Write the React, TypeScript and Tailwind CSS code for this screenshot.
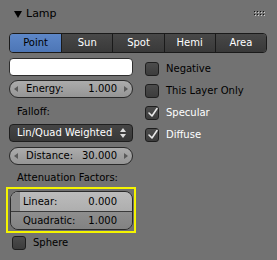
import React from 'react';

const tabs = ['Point', 'Sun', 'Spot', 'Hemi', 'Area'];

const checks = [
  { label: 'Negative', on: false },
  { label: 'This Layer Only', on: false },
  { label: 'Specular', on: true },
  { label: 'Diffuse', on: true },
];

function Checkbox({ on }: { on: boolean }) {
  return (
    <div className="relative w-[14px] h-[14px] shrink-0 rounded-[3px] border border-[#1e1e1e] bg-gradient-to-b from-[#4c4c4c] to-[#3c3c3c]">
      {on && (
        <svg className="absolute left-[1px] top-[0px]" width="12" height="12" viewBox="0 0 12 12">
          <polyline points="2,6 5,9 10,1.5" fill="none" stroke="#e8e8e8" strokeWidth="1.6" strokeLinecap="round" strokeLinejoin="round" />
        </svg>
      )}
    </div>
  );
}

function NumField({ label, value }: { label: string; value: string }) {
  return (
    <div className="relative h-[18px] rounded-[9px] border border-[#2a2a2a] bg-gradient-to-b from-[#acacac] to-[#959595] flex items-center pl-[16px] pr-[15px] text-black">
      <span className="absolute left-[4px] top-[5px] w-0 h-0 border-y-[3px] border-y-transparent border-r-[4px] border-r-[#5a5a5a]" />
      <span className="flex-1">{label}</span>
      <span>{value}</span>
      <span className="absolute right-[4px] top-[5px] w-0 h-0 border-y-[3px] border-y-transparent border-l-[4px] border-l-[#5a5a5a]" />
    </div>
  );
}

export default function App() {
  return (
    <div className="w-[277px] h-[260px] bg-[#727272] overflow-hidden font-['DejaVu_Sans',sans-serif] text-[10px] leading-none select-none">
      {/* header */}
      <div className="h-[27px] flex items-center pl-[14px] pr-[11px]">
        <svg width="8" height="8" viewBox="0 0 8 8" className="mt-[1px]">
          <polygon points="0,1 8,1 4,8" fill="#000" />
        </svg>
        <span className="ml-[4px] text-[11px] text-black flex-1">Lamp</span>
        <svg width="12" height="6" viewBox="0 0 12 6">
          {[0, 3, 6, 9].map(x =>
            [0, 3].map(y => (
              <g key={`${x}-${y}`}>
                <rect x={x + 1} y={y + 1} width="1" height="1" fill="#cfcfcf" />
                <rect x={x} y={y} width="1" height="1" fill="#111" />
              </g>
            ))
          )}
        </svg>
      </div>

      {/* lamp type tabs */}
      <div className="mt-[6px] ml-[9px] w-[258px] h-[20px] grid grid-cols-5 rounded-[4px] border border-[#1a1a1a] overflow-hidden">
        {tabs.map((t, i) => (
          <div
            key={t}
            className={
              'flex items-center justify-center ' +
              (i > 0 ? 'border-l border-[#1a1a1a] ' : '') +
              (i === 0
                ? 'bg-gradient-to-b from-[#5d87c8] to-[#4d76b6] text-black'
                : 'bg-gradient-to-b from-[#484848] to-[#393939] text-white')
            }
          >
            {t}
          </div>
        ))}
      </div>

      <div className="flex">
        {/* left column */}
        <div className="ml-[9px] w-[124px] flex flex-col">
          <div className="mt-[5px] h-[18px] rounded-[4px] border border-[#2e2e2e] bg-white" />
          <div className="mt-[4px]">
            <NumField label="Energy:" value="1.000" />
          </div>
          <div className="mt-[5px] h-[18px] flex items-center pl-[8px] text-black">Falloff:</div>
          <div className="mt-[3px] h-[18px] rounded-[4px] border border-[#1e1e1e] bg-gradient-to-b from-[#454545] to-[#383838] flex items-center pl-[7px] pr-[6px] text-white">
            <span className="flex-1">Lin/Quad Weighted</span>
            <span className="flex flex-col gap-[2px]">
              <span className="w-0 h-0 border-x-[3px] border-x-transparent border-b-[4px] border-b-[#dddddd]" />
              <span className="w-0 h-0 border-x-[3px] border-x-transparent border-t-[4px] border-t-[#dddddd]" />
            </span>
          </div>
          <div className="mt-[5px]">
            <NumField label="Distance:" value="30.000" />
          </div>
          <div className="mt-[4px] h-[18px] flex items-center pl-[8px] text-black">Attenuation Factors:</div>

          {/* highlighted group */}
          <div className="-mx-[3px] border-2 border-[#f4f400] pt-[2px] pb-[1px] pl-[2px] pr-[1px]">
            <div className="rounded-[8px] border border-[#2a2a2a] overflow-hidden text-black">
              <div className="relative h-[19px] flex items-center bg-gradient-to-b from-[#bcbcbc] to-[#aeaeae] pl-[12px] pr-[15px]">
                <span className="absolute left-0 top-0 bottom-0 w-[9px] bg-[#8a8a8a]" />
                <span className="relative flex-1">Linear:</span>
                <span className="relative">0.000</span>
              </div>
              <div className="h-[18px] flex items-center border-t border-[#3a3a3a] bg-gradient-to-b from-[#8e8e8e] to-[#828282] pl-[12px] pr-[15px]">
                <span className="flex-1">Quadratic:</span>
                <span>1.000</span>
              </div>
            </div>
          </div>

          <div className="mt-[3px] ml-[3px] h-[14px] flex items-center gap-[7px] text-black">
            <Checkbox on={false} />
            <span>Sphere</span>
          </div>
        </div>

        {/* right column */}
        <div className="ml-[12px] mt-[9px] flex flex-col gap-[8px]">
          {checks.map(c => (
            <div key={c.label} className="h-[14px] flex items-center gap-[7px]">
              <Checkbox on={c.on} />
              <span className={c.on ? 'text-white' : 'text-black'}>{c.label}</span>
            </div>
          ))}
        </div>
      </div>
    </div>
  );
}
